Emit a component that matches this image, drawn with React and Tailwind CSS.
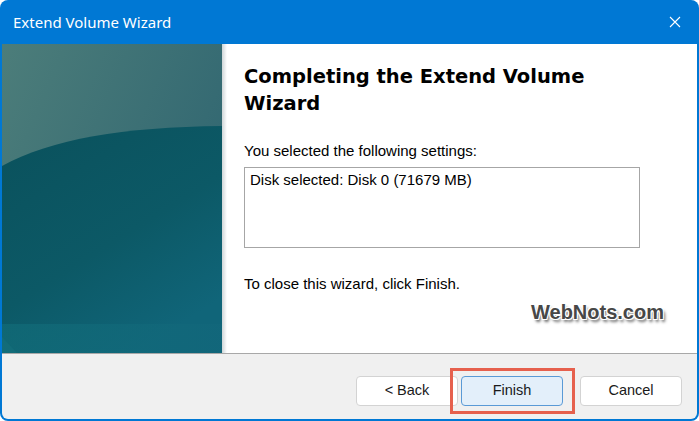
import React from 'react';

const sans = "font-['Liberation_Sans',Arial,sans-serif]";

function SidePanel() {
  return (
    <div className="w-[220px] h-full shrink-0 bg-[#0d5a66]">
      <svg width="220" height="309" viewBox="0 0 220 309" className="block">
        <defs>
          <linearGradient id="top" x1="0" y1="0" x2="1" y2="0.6">
            <stop offset="0" stopColor="#4c7d7a" />
            <stop offset="1" stopColor="#306671" />
          </linearGradient>
          <linearGradient id="deep" x1="0" y1="0" x2="0.6" y2="1">
            <stop offset="0" stopColor="#0a515c" />
            <stop offset="0.6" stopColor="#0c5966" />
            <stop offset="1" stopColor="#106579" />
          </linearGradient>
          <linearGradient id="band" x1="0" y1="0" x2="1" y2="0">
            <stop offset="0" stopColor="#116c78" />
            <stop offset="1" stopColor="#12677b" />
          </linearGradient>
        </defs>
        <rect width="220" height="309" fill="url(#top)" />
        <path d="M0 122 C 50 95, 120 83, 220 82 L220 309 L0 309 Z" fill="url(#deep)" />
        <rect y="280" width="220" height="29" fill="url(#band)" opacity="0.7" />
        <path d="M0 293 L15 309 L0 309 Z" fill="#1a7682" opacity="0.35" />
      </svg>
    </div>
  );
}

function WizardButton({ children, primary }) {
  return (
    <button
      className={
        'h-[30px] w-[102px] rounded-[4px] border text-[14.5px] text-[#1a1a1a] ' +
        sans +
        (primary
          ? ' border-[#5a9ad6] bg-[#e3effa]'
          : ' border-[#d3d3d3] bg-white')
      }
    >
      {children}
    </button>
  );
}

export default function App() {
  return (
    <div className="w-[699px] h-[421px] bg-white relative overflow-hidden">
      <div className="h-full flex flex-col rounded-[8px] bg-[#0078d4] px-[2px] pb-[2px] overflow-hidden">
        <div className="h-[44px] shrink-0 flex items-center justify-between pl-[11px] pr-[16px]">
          <span className="font-['Noto_Sans',sans-serif] text-[15px] text-white pt-[1px]">
            Extend Volume Wizard
          </span>
          <svg width="12" height="12" viewBox="0 0 12 12" className="mb-[1px]">
            <path d="M1 1 L11 11 M11 1 L1 11" stroke="white" strokeWidth="1.1" />
          </svg>
        </div>

        <div className="flex h-[309px] shrink-0 bg-white">
          <SidePanel />
          <div className="w-[5px] h-full bg-gradient-to-r from-[#cfd6d8] to-white" />
          <div className={'flex-1 pl-[17px] pt-[19px] text-[15px] leading-[18px] text-black ' + sans}>
            <h1 className="font-['DejaVu_Sans',Verdana,sans-serif] font-bold text-[19.5px] leading-[27px] text-black">
              Completing the Extend Volume
              <br />
              Wizard
            </h1>
            <p className="mt-[25px]">You selected the following settings:</p>
            <div className="mt-[7px] w-[396px] h-[81px] border border-[#a6a6a6] pl-[5px] pt-[3px]">
              Disk selected: Disk 0 (71679 MB)
            </div>
            <p className="mt-[27px]">To close this wizard, click Finish.</p>
          </div>
        </div>

        <div className="flex-1 bg-[#f0f0f0] border-t border-[#a8a8a8] flex items-start justify-end pt-[22px] pr-[15px] rounded-b-[6px]">
          <div className="flex">
            <WizardButton>&lt; Back</WizardButton>
            <div className="ml-[3px]">
              <WizardButton primary>Finish</WizardButton>
            </div>
            <div className="ml-[17px]">
              <WizardButton>Cancel</WizardButton>
            </div>
          </div>
        </div>
      </div>

      <div className="absolute left-[450px] top-[368px] w-[125px] h-[46px] border-[3px] border-[#e6604d]" />

      <div
        className={
          "absolute left-[531px] top-[299px] font-['Liberation_Sans',Arial,sans-serif] font-bold text-[20px] leading-[26px] text-[#474747] " +
          '[text-shadow:-1px_-1px_0_#fff,1px_-1px_0_#fff,-1px_1px_0_#fff,1px_1px_0_#fff,2px_3px_3px_rgba(0,0,0,0.6)]'
        }
      >
        WebNots.com
      </div>
    </div>
  );
}
